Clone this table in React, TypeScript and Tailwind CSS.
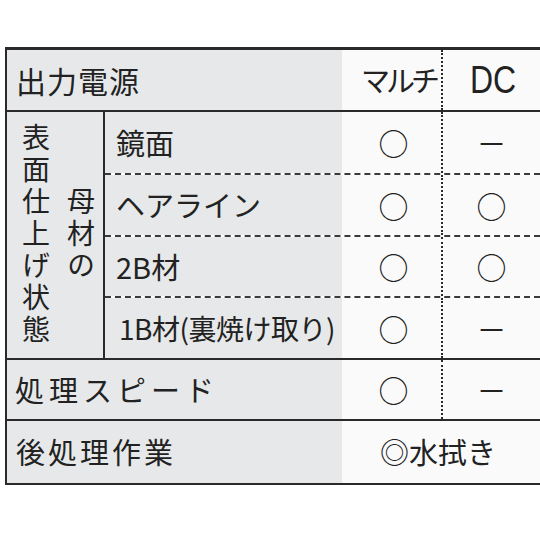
import React from 'react'

const font = "font-['Noto_Sans_CJK_JP','Noto_Sans',sans-serif]"

const rows = [
    { label: '鏡面', multi: '○', dc: '－', h: 'h-[63px]', text: 'text-[29px]' },
    { label: 'ヘアライン', multi: '○', dc: '○', h: 'h-[62px]', text: 'text-[29px]' },
    { label: '2B材', multi: '○', dc: '○', h: 'h-[61px]', text: 'text-[29px]' },
    { label: '1B材(裏焼け取り)', multi: '○', dc: '－', h: 'h-[60px]', text: 'text-[28px] tracking-[-0.5px] pl-[14px]' },
]

const App = () => {
    return (
        <div className={`w-[540px] h-[540px] bg-white pt-[47px] pl-[5px] text-[#222] ${font}`}>
            <div className="w-[535px] border-t-[3px] border-l-2 border-b-2 border-[#2a2a2a]">
                {/* header */}
                <div className="flex h-[62px] border-b-2 border-[#2a2a2a]">
                    <div className="w-[335px] bg-[#e6e8e9] flex items-center pl-[9px] text-[30px] tracking-[1px]">
                        出力電源
                    </div>
                    <div className="w-[101px] bg-[#fafafa] border-r-2 border-dotted border-[#2a2a2a] flex items-center justify-end pr-[5px] text-[29px] tracking-[-4px]">
                        マルチ
                    </div>
                    <div className="flex-1 bg-[#fafafa] flex items-center pl-[27px]">
                        <span className="inline-block text-[32px] font-['Liberation_Sans',sans-serif] scale-y-[1.2]">DC</span>
                    </div>
                </div>

                {/* surface finish group */}
                <div className="flex h-[248px] border-b-2 border-[#2a2a2a]">
                    <div className="w-[98px] bg-[#e6e8e9] border-r-2 border-[#2a2a2a] flex items-center pl-[14px] gap-[15px]">
                        <div className="[writing-mode:vertical-rl] text-[28px] tracking-[4px] leading-[30px]">表面仕上げ状態</div>
                        <div className="[writing-mode:vertical-rl] text-[28px] tracking-[4px] leading-[30px]">母材の</div>
                    </div>
                    <div className="flex-1 flex flex-col">
                        {rows.map((r, i) => (
                            <div
                                key={r.label}
                                className={`flex ${r.h} ${i < rows.length - 1 ? 'border-b-2 border-dashed border-[#3a3a3a]' : ''}`}
                            >
                                <div className={`w-[237px] bg-[#e6e8e9] flex items-center pl-[11px] whitespace-nowrap ${r.text}`}>
                                    {r.label}
                                </div>
                                <div className="w-[101px] bg-[#fafafa] border-r-2 border-dotted border-[#2a2a2a] flex items-center justify-center pl-[4px] text-[30px]">
                                    {r.multi}
                                </div>
                                <div className="flex-1 bg-[#fafafa] flex items-center justify-center text-[30px]">
                                    {r.dc}
                                </div>
                            </div>
                        ))}
                    </div>
                </div>

                {/* speed */}
                <div className="flex h-[61px] border-b-2 border-[#2a2a2a]">
                    <div className="w-[335px] bg-[#e6e8e9] flex items-center pl-[8px] text-[29px] tracking-[5px]">
                        処理スピード
                    </div>
                    <div className="w-[101px] bg-[#fafafa] border-r-2 border-dotted border-[#2a2a2a] flex items-center justify-center pl-[4px] text-[30px]">
                        ○
                    </div>
                    <div className="flex-1 bg-[#fafafa] flex items-center justify-center text-[30px]">
                        －
                    </div>
                </div>

                {/* post process */}
                <div className="flex h-[62px]">
                    <div className="w-[335px] bg-[#e6e8e9] flex items-center pl-[9px] text-[29px] tracking-[3px]">
                        後処理作業
                    </div>
                    <div className="flex-1 bg-[#fafafa] flex items-center justify-center pr-[6px] text-[29px]">
                        ◎水拭き
                    </div>
                </div>
            </div>
        </div>
    )
}

export default App
